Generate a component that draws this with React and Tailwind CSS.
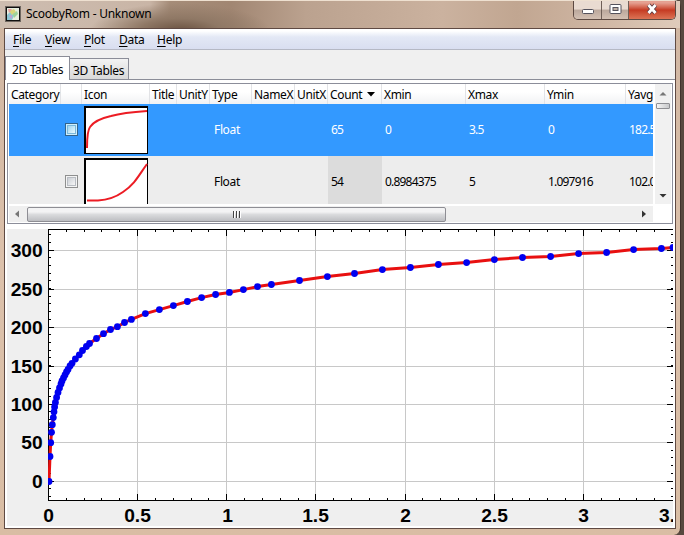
import React from 'react';

const points = [
  [49, 481.5], [50, 456.5], [50.7, 442.7], [51.5, 432.3], [52.3, 424.7], [53.3, 417.6], [54, 411.8], [54.6, 407], [55.4, 402.5],
  [56.6, 397.5], [58, 392.5], [59.5, 388], [61, 384], [62, 381], [63.5, 378], [65, 375], [66.5, 372], [68, 369.5], [70, 366],
  [72, 363.3], [75.4, 359], [79.3, 354.8], [82.5, 350.5], [86.4, 346.5], [89.5, 343.5], [96.5, 338.5], [103.5, 333.7],
  [110.5, 329.5], [117.4, 326.7], [124.5, 322.5], [131.4, 319.4], [145.4, 313.6], [159.4, 309.6], [173.4, 305.6], [187.4, 301.5],
  [201.6, 297.6], [215.6, 294.5], [229.4, 292.4], [243.4, 289.6], [257.5, 286.6], [271.4, 284.5], [299.5, 280.5], [327.4, 276.6],
  [354.5, 273.5], [382.4, 269.6], [410.4, 267.5], [438.4, 264.5], [466.6, 262.6], [494.4, 259.6], [522.5, 257.5], [550.6, 256.5],
  [578.6, 253.6], [606.6, 252.5], [633.6, 249.6], [661.4, 248.5], [673, 247.5],
];

const gridX = [137.5, 226.5, 315.5, 405.5, 494.5, 583.5];
const gridY = [250.5, 289.5, 327.5, 366.5, 404.5, 442.5, 481.5];
const labelsY = ['300', '250', '200', '150', '100', '50', '0'];
const labelsX = [['0', 48.5], ['0.5', 137.5], ['1', 227.5], ['1.5', 315.5], ['2', 405.5], ['2.5', 494.5], ['3', 583.5]];
const minorX = Array.from({ length: 35 }, (_, i) => 48.5 + Math.round(i * 17.83));
const minorY = Array.from({ length: 35 }, (_, i) => 496.5 - Math.round(i * 7.7)).filter((y) => y > 231);

function Chart() {
  const path = points.map((p) => p.join(',')).join(' ');
  return (
    <svg width="667" height="297" viewBox="7 229 667 297" className="block shrink-0" fontFamily="Liberation Sans, sans-serif">
      <clipPath id="plot"><rect x="48" y="229" width="625" height="272" /></clipPath>
      <clipPath id="area"><rect x="7" y="229" width="666" height="298" /></clipPath>
      <rect x="7" y="229" width="666" height="298" fill="#efefef" />
      <rect x="48" y="229" width="626" height="272" fill="#fff" />
      <g stroke="#c8c8c8" shapeRendering="crispEdges">
        {gridX.map((x) => <line key={x} x1={x} x2={x} y1="230" y2="500" />)}
        {gridY.map((y) => <line key={y} x1="49" x2="673" y1={y} y2={y} />)}
      </g>
      <g stroke="#000" shapeRendering="crispEdges">
        <path d="M48.5 501V229.5H673M48 500.5H673" fill="none" />
        {minorX.map((x) => <path key={x} d={`M${x} 230v2M${x} 500v-2`} />)}
        {minorY.map((y) => <path key={y} d={`M49 ${y}h2M671 ${y}h2`} />)}
        {gridX.map((x) => <path key={x} d={`M${x} 230v6M${x} 500v-6`} />)}
        {gridY.map((y) => <path key={y} d={`M49 ${y}h5M667 ${y}h6`} />)}
      </g>
      <g clipPath="url(#plot)">
        <polyline points={path} fill="none" stroke="#e81010" strokeWidth="3" />
        {points.map(([x, y]) => <circle key={x} cx={x} cy={y} r="3.4" fill="#0000f0" />)}
      </g>
      <g fontWeight="700" fontSize="19.2" clipPath="url(#area)">
        {labelsY.map((t, i) => <text key={t} x="42.700" y={gridY[i] + 6.5} textAnchor="end">{t}</text>)}
        {labelsX.map(([t, x]) => <text key={t} x={x} y="521.7" textAnchor="middle">{t}</text>)}
        <text x="659" y="521.7">3.5</text>
      </g>
    </svg>
  );
}

function Thumb({ d }) {
  return (
    <svg width="64" height="48" viewBox="0 0 64 48" className="ml-[2px] mt-[2px] block">
      <rect width="64" height="48" fill="#000" />
      <rect x="2" y="2" width="61" height="45" fill="#fff" />
      <path d={d} fill="none" stroke="#ec1c24" strokeWidth="2" />
    </svg>
  );
}

function Check({ on }) {
  return (
    <div className={`mt-[19px] ml-1 size-[13px] border p-px ${on ? 'border-[#33648c] bg-[#cdeefc]' : 'border-[#8e8f8f] bg-[#f4f4f4]'}`}>
      <div className={`size-full border bg-linear-to-br ${on ? 'border-[#7ab8dc] from-[#9ed3ef] to-[#e8fbff]' : 'border-[#b8bcc2] from-[#cbcfd5] to-[#f6f6f6]'}`} />
    </div>
  );
}

const columns = [
  ['Category', 'w-[52px]'], ['', 'w-[21px]'], ['Icon', 'w-[68px]'], ['Title', 'w-[27px]'], ['UnitY', 'w-[33px]'],
  ['Type', 'w-[42px]'], ['NameX', 'w-[43px]'], ['UnitX', 'w-[33px]'], ['Count', 'w-[54px]'], ['Xmin', 'w-[84px]'],
  ['Xmax', 'w-[79px]'], ['Ymin', 'w-[81px]'], ['Yavg', 'w-[81px]'],
];

function Row({ on, d, values }) {
  return (
    <div className={`flex h-[52px] w-[700px] leading-[52px] ${on ? 'bg-[#3399ff] text-white' : 'bg-[#ededed]'}`}>
      <div className="w-[52px] shrink-0" />
      <div className="w-[21px] shrink-0"><Check on={on} /></div>
      <div className="w-[68px] shrink-0"><Thumb d={d} /></div>
      <div className="w-[64px] shrink-0" />
      <div className="w-[114px] shrink-0">Float</div>
      <div className="flex tracking-[-0.8px]">
        <div className={`w-[54px] shrink-0 pl-[3px] ${on ? '' : 'bg-[#dcdcdc]'}`}>{values[0]}</div>
        <div className="w-[84px] shrink-0 pl-[3px]">{values[1]}</div>
        <div className="w-[79px] shrink-0 pl-[3px]">{values[2]}</div>
        <div className="w-[81px] shrink-0 pl-[3px]">{values[3]}</div>
        <div className="w-[81px] shrink-0 pl-[3px]">{values[4]}</div>
      </div>
    </div>
  );
}

function Table() {
  return (
    <div className="mx-[2px] mt-[3px] flex h-[141px] w-[666px] shrink-0 flex-col border border-[#8c8e9a] bg-white pl-px">
      <div className="flex h-[120px]">
        <div className="h-[120px] w-[644px] shrink-0 overflow-hidden tracking-[-0.35px]">
          <div className="flex h-5 w-[700px] bg-linear-to-b from-white from-40% to-[#f1f2f4] leading-[21px]">
            {columns.map(([name, width], i) => (
              <div key={i} className={`${width} flex shrink-0 items-center whitespace-nowrap border-r border-[#e2e3e6] pl-[2px]`}>
                {name}
                {name === 'Count' && <svg width="8" height="5" className="ml-[5px]"><path d="M0 0h8L4 4.5z" /></svg>}
              </div>
            ))}
          </div>
          <Row on d="M3 42C3 34 3 25 6 21C10 15 18 12 27 10C38 7 49 6 63 5" values={['65', '0', '3.5', '0', '182.5']} />
          <Row d="M3 42.500H14C22 42 32 39 39 34C51 26 55 17 63 6" values={['54', '0.8984375', '5', '1.097916', '102.0']} />
        </div>
        <div className="ml-[2px] flex w-4 flex-col items-center bg-[#f1f1f1]">
          <svg width="16" height="19"><path d="M4.500 11.500L8 8l3.500 3.500z" fill="#777" /></svg>
          <div className="h-[6px] w-[14px] rounded-[1px] border border-[#8f8f93] bg-linear-to-r from-[#f4f4f4] to-[#c8c9cb]" />
          <svg width="16" height="16" className="mt-auto"><path d="M4.500 6L8 9.500L11.500 6z" fill="#333" /></svg>
        </div>
      </div>
      <div className="mt-[2px] flex h-4 w-[644px] items-center bg-[#efefef]">
        <svg width="18" height="16"><path d="M10 4.500v7L6 8z" fill="#777" /></svg>
        <div className="flex h-[15px] w-[419px] items-center justify-center gap-px rounded-[2px] border border-[#8e8e94] bg-linear-to-b from-[#f3f3f4] from-30% via-[#dadbdd] via-50% to-[#bdbec2]">
          <i className="h-[7px] w-[2px] border-l border-[#444] bg-white" />
          <i className="h-[7px] w-[2px] border-l border-[#444] bg-white" />
          <i className="h-[7px] w-[2px] border-l border-[#444] bg-white" />
        </div>
        <svg width="16" height="16" className="ml-auto mr-px"><path d="M6 4.500v7L10 8z" fill="#333" /></svg>
      </div>
    </div>
  );
}

function AppIcon() {
  return (
    <svg width="16" height="16" viewBox="0 0 16 16" className="shrink-0">
      <rect x="1" y="1" width="14" height="14" fill="#111" />
      <rect x=".5" y=".5" width="15" height="15" fill="none" stroke="#111" strokeDasharray="1 1" />
      <rect x="2" y="2" width="12" height="12" fill="#e8efe0" />
      <path d="M2 9L7 4l3 4-3 6H2z" fill="#8dc7d5" />
      <path d="M4 5l5-2 2 3-4 3z" fill="#d9d67c" />
      <path d="M8 8l4-3 1 3-4 4z" fill="#9ed39a" />
      <path d="M3 3h4L4 7z" fill="#e7a0a0" />
      <path d="M4 10l3-1v4z" fill="#c59fd0" />
    </svg>
  );
}

function Controls() {
  return (
    <div className="flex h-[19px] w-[103px] overflow-hidden rounded-b-[5px] border border-t-0 border-[#5d4a42]">
      <div className="flex w-7 justify-center border-r border-[#6f5f57] bg-linear-to-b from-[#e9dbd1] from-45% via-[#bba89c] via-50% to-[#d3c0b3]">
        <svg width="14" height="18"><rect x="1.500" y="8.500" width="11" height="4" rx="1" fill="#fff" stroke="#54525c" /></svg>
      </div>
      <div className="flex w-[27px] justify-center border-r border-[#6f5f57] bg-linear-to-b from-[#e9dbd1] from-45% via-[#bba89c] via-50% to-[#d3c0b3]">
        <svg width="13" height="18">
          <rect x="1" y="3.500" width="11" height="9" rx="1" fill="#fff" stroke="#54525c" />
          <rect x="4" y="6.500" width="5" height="3" fill="#c0afa4" stroke="#54525c" />
        </svg>
      </div>
      <div className="flex flex-1 justify-center bg-linear-to-b from-[#e5a091] from-10% via-[#c53a22] via-50% to-[#dc7355]">
        <svg width="14" height="18">
          <path d="M3.500 4l7 8M10.500 4l-7 8" stroke="#5b3a42" strokeWidth="4.500" />
          <path d="M3.500 4l7 8M10.500 4l-7 8" stroke="#fff" strokeWidth="2.800" />
        </svg>
      </div>
    </div>
  );
}

const menus = [['File', 'w-8'], ['View', 'w-[39px]'], ['Plot', 'w-[35px]'], ['Data', 'w-[38px]'], ['Help', 'w-[38px]']];

export default function App() {
  return (
    <div className="h-[535px] w-[684px] overflow-hidden bg-[#57493f] pr-[4px] font-['Noto_Sans','Open_Sans',sans-serif] text-[12px] text-black">
      <div className="flex h-[535px] w-[681px] flex-col rounded-tr-[7px] rounded-br-[7px] border-r border-t border-r-[#40332c] border-t-[#eee0d0] bg-linear-to-b from-[#cfb5a1] via-[#dcc1ab] to-[#d9bda4]">
        <div className="flex h-[27px] shrink-0 items-start justify-between bg-[radial-gradient(ellipse_90px_28px_at_180px_30px,#69513f_0%,#8f7865_45%,transparent_100%),linear-gradient(90deg,#cdbdb0_0%,#c9b5a6_22%,#a58c78_25%,#a18672_34%,#bba28f_45%,#cbb29f_65%,#c1a691_76%,#cfb6a3_88%,#dfcbbb_100%)] pl-[5px] pr-[4px]">
          <div className="mt-[5px] flex items-center gap-[5px] leading-4 tracking-[-0.25px]"><AppIcon /><span>ScoobyRom - Unknown</span></div>
          <Controls />
        </div>
        <div className="ml-1 flex h-[501px] w-[672px] shrink-0 flex-col border border-[#5f4a43] bg-white">
          <div className="flex h-[21px] shrink-0 border-b border-[#b5b8c4] bg-linear-to-b from-white from-10% via-[#e3e8f5] via-40% to-[#d9def0] pl-2 leading-[22px] tracking-[-0.25px]">
            {menus.map(([m, width]) => (
              <div key={m} className={`${width} shrink-0`}><span className="underline underline-offset-2">{m[0]}</span>{m.slice(1)}</div>
            ))}
          </div>
          <div className="flex h-[30px] shrink-0 items-end border-b border-[#8b8d98] bg-[#f0f0f0] tracking-[-0.35px]">
            <div className="-mb-px h-[24px] w-[65px] whitespace-nowrap border border-b-0 border-[#8b8d98] bg-white pl-[6px] leading-[25px]">2D Tables</div>
            <div className="h-[21px] w-[59px] whitespace-nowrap border border-b-0 border-l-0 border-[#8b8d98] bg-linear-to-b from-[#f3f3f3] to-[#d9d9d9] pl-[3px] leading-[23px]">3D Tables</div>
          </div>
          <Table />
          <div className="mt-[5px] ml-[2px] flex"><Chart /></div>
        </div>
      </div>
    </div>
  );
}
